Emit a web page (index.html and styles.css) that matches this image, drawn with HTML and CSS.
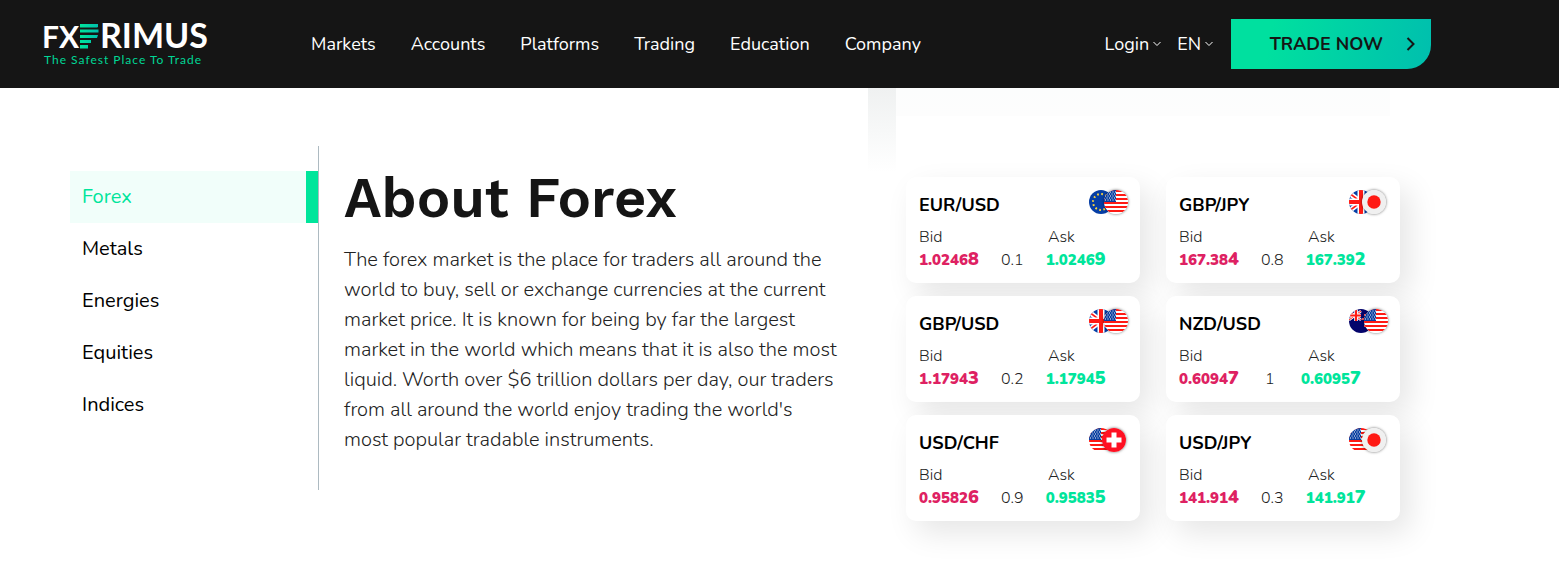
FILE: index.html
```html
<!DOCTYPE html>
<html lang="en">

  <head>
    <meta charset="UTF-8">
    <meta name="viewport" content="width=device-width, initial-scale=1.0">
    <title>FXPRIMUS</title>
    <link rel="stylesheet" href="styles.css">
  </head>

  <body>
    <!-- flags and arrows, reused below -->
    <svg class="sprite" aria-hidden="true">
      <symbol id="us" viewBox="0 0 24 24">
        <rect width="24" height="24" fill="#fff"/>
        <path d="M0 1h24M0 5h24M0 9h24M0 13h24M0 17h24M0 21h24" stroke="#ff1a14" stroke-width="2"/>
        <rect width="12" height="12" fill="#0a3fa0"/>
        <path d="M1 2h11M0 4h12M1 6h11M0 8h12M1 10h11" stroke="#fff" stroke-width="1" stroke-dasharray="1 1.5"/>
      </symbol>
      <symbol id="eu" viewBox="0 0 24 24">
        <rect width="24" height="24" fill="#063ea5"/>
        <circle cx="12" cy="12" r="8" fill="none" stroke="#ffd83a" stroke-width="2" stroke-dasharray="1.7 2.49"/>
      </symbol>
      <symbol id="gb" viewBox="0 0 24 24">
        <rect width="24" height="24" fill="#063ea5"/>
        <path d="M0 3l24 18M0 21l24-18" stroke="#fff" stroke-width="5"/>
        <path d="M0 3l24 18M0 21l24-18" stroke="#ff1a14" stroke-width="1.6"/>
        <path d="M12 0v24M0 12h24" stroke="#fff" stroke-width="7"/>
        <path d="M12 0v24M0 12h24" stroke="#ff1a14" stroke-width="4"/>
      </symbol>
      <symbol id="nz" viewBox="0 0 24 24">
        <rect width="24" height="24" fill="#04046b"/>
        <path d="M0 2l12 9M0 11l12-9" stroke="#fff" stroke-width="2.6"/>
        <path d="M0 2l12 9M0 11l12-9" stroke="#ff1a14" stroke-width="1"/>
        <path d="M7 0v12M0 6.500h12" stroke="#fff" stroke-width="3.600"/>
        <path d="M7 0v12M0 6.500h12" stroke="#ff1a14" stroke-width="2"/>
        <path d="M15 6h2M13 10h2M18 10h2M15 17h2" stroke="#ff5a5a" stroke-width="2"/>
      </symbol>
      <symbol id="jp" viewBox="0 0 24 24">
        <rect width="24" height="24" fill="#f0f0f0"/>
        <circle cx="12" cy="12" r="6.700" fill="#ff1a14"/>
      </symbol>
      <symbol id="ch" viewBox="0 0 24 24">
        <rect width="24" height="24" fill="#ff1022"/>
        <path d="M12 4.500v15M4.500 12h15" stroke="#fff" stroke-width="5"/>
      </symbol>
      <symbol id="down" viewBox="0 0 8 6">
        <path d="M0.500 1l3.500 3.500L7.500 1" fill="none" stroke="currentColor"/>
      </symbol>
    </svg>

    <header class="header">
      <a href="#" class="logo" aria-label="FXPRIMUS">
        <svg width="168" height="56" viewBox="0 -5 168 56">
          <defs>
            <linearGradient id="bars" x1="0" x2="1">
              <stop offset="0" stop-color="#00e59b"/>
              <stop offset="1" stop-color="#00bfae"/>
            </linearGradient>
          </defs>
          <text x="-2" y="27" class="logo-fx">FX</text>
          <path d="M36 3h18v3l-1 0.500H36zM36 8.500h18.500v3H36zM36 14h18l-1 3H36zM36 19h11v3H36zM36 24h8v3.500H36z" fill="url(#bars)"/>
          <text x="56" y="27" class="logo-primus">RIMUS</text>
          <text x="0" y="43" class="logo-line">The Safest Place To Trade</text>
        </svg>
      </a>
      <nav class="menu">
        <a href="#">Markets</a>
        <a href="#">Accounts</a>
        <a href="#">Platforms</a>
        <a href="#">Trading</a>
        <a href="#">Education</a>
        <a href="#">Company</a>
      </nav>
      <div class="tools">
        <button type="button" class="drop">Login<svg width="8" height="6"><use href="#down"/></svg></button>
        <button type="button" class="drop">EN<svg width="8" height="6"><use href="#down"/></svg></button>
        <button type="button" class="trade">TRADE NOW
          <svg width="10" height="14" viewBox="0 0 10 14"><path d="M1.500 1l6 6-6 6" fill="none" stroke="#151515" stroke-width="2"/></svg>
        </button>
      </div>
    </header>

    <main class="main">
      <nav class="side">
        <a href="#" class="on">Forex</a>
        <a href="#">Metals</a>
        <a href="#">Energies</a>
        <a href="#">Equities</a>
        <a href="#">Indices</a>
      </nav>

      <section class="about">
        <h1>About Forex</h1>
        <p>The forex market is the place for traders all around the world to buy, sell or exchange currencies at the current market price. It is known for being by far the largest market in the world which means that it is also the most liquid. Worth over $6 trillion dollars per day, our traders from all around the world enjoy trading the world's most popular tradable instruments.</p>
      </section>

      <section class="quotes">
        <div class="card">
          <div class="top">
            <h2>EUR/USD</h2>
            <div class="flags"><svg><use href="#eu"/></svg><svg class="front"><use href="#us"/></svg></div>
          </div>
          <div class="label"><span>Bid</span><span>Ask</span></div>
          <div class="price"><span class="bid">1.0246<b>8</b></span><span class="spread">0.1</span><span class="ask">1.0246<b>9</b></span></div>
        </div>
        <div class="card">
          <div class="top">
            <h2>GBP/JPY</h2>
            <div class="flags"><svg><use href="#gb"/></svg><svg class="front near"><use href="#jp"/></svg></div>
          </div>
          <div class="label"><span>Bid</span><span>Ask</span></div>
          <div class="price"><span class="bid">167.38<b>4</b></span><span class="spread">0.8</span><span class="ask">167.39<b>2</b></span></div>
        </div>
        <div class="card">
          <div class="top">
            <h2>GBP/USD</h2>
            <div class="flags"><svg><use href="#gb"/></svg><svg class="front"><use href="#us"/></svg></div>
          </div>
          <div class="label"><span>Bid</span><span>Ask</span></div>
          <div class="price"><span class="bid">1.1794<b>3</b></span><span class="spread">0.2</span><span class="ask">1.1794<b>5</b></span></div>
        </div>
        <div class="card">
          <div class="top">
            <h2>NZD/USD</h2>
            <div class="flags"><svg><use href="#nz"/></svg><svg class="front"><use href="#us"/></svg></div>
          </div>
          <div class="label"><span>Bid</span><span>Ask</span></div>
          <div class="price"><span class="bid">0.6094<b>7</b></span><span class="spread">1</span><span class="ask">0.6095<b>7</b></span></div>
        </div>
        <div class="card">
          <div class="top">
            <h2>USD/CHF</h2>
            <div class="flags"><svg><use href="#us"/></svg><svg class="front near"><use href="#ch"/></svg></div>
          </div>
          <div class="label"><span>Bid</span><span>Ask</span></div>
          <div class="price"><span class="bid">0.9582<b>6</b></span><span class="spread">0.9</span><span class="ask">0.9583<b>5</b></span></div>
        </div>
        <div class="card">
          <div class="top">
            <h2>USD/JPY</h2>
            <div class="flags"><svg><use href="#us"/></svg><svg class="front near"><use href="#jp"/></svg></div>
          </div>
          <div class="label"><span>Bid</span><span>Ask</span></div>
          <div class="price"><span class="bid">141.91<b>4</b></span><span class="spread">0.3</span><span class="ask">141.91<b>7</b></span></div>
        </div>
      </section>
    </main>
  </body>

</html>
```
FILE: styles.css
```css
* {
  box-sizing: border-box;
}

body {
  margin: 0;
  background: #fff;
  color: #000;
  font-family: Nunito, Lato, sans-serif;
}

a {
  color: inherit;
  text-decoration: none;
}

button {
  border: 0;
  background: none;
  font-family: inherit;
  cursor: pointer;
}

.sprite {
  position: absolute;
  width: 0;
  height: 0;
}

/* header */
.header {
  display: flex;
  align-items: center;
  height: 88px;
  padding: 0 128px 0 44px;
  background: #151515;
  color: #fff;
}

.logo svg {
  display: block;
  overflow: visible;
}

.logo text {
  font-family: Lato, sans-serif;
}

.logo-fx {
  fill: #fff;
  font-size: 30px;
  font-weight: 700;
}

.logo-primus {
  fill: #fff;
  font-size: 34px;
  font-weight: 700;
}

.logo-line {
  fill: #00d795;
  font-size: 12px;
  letter-spacing: 1px;
}

.menu {
  display: flex;
  gap: 35px;
  margin-left: 99px;
  font-size: 18px;
}

.tools {
  display: flex;
  align-items: center;
  gap: 16px;
  margin-left: auto;
}

.drop {
  display: flex;
  align-items: center;
  gap: 4px;
  padding: 0 2px 0 0;
  color: #fff;
  font-size: 18px;
}

.drop + .drop {
  margin-left: -2px;
}

.trade {
  display: flex;
  align-items: center;
  justify-content: flex-end;
  gap: 23px;
  width: 200px;
  height: 50px;
  padding: 0 15px;
  border-radius: 0 0 24px 0;
  background: linear-gradient(100deg, #00e09f 20%, #00bfae);
  color: #151515;
  font-size: 18px;
  font-weight: 700;
}

/* content */
.main {
  display: flex;
  align-items: flex-start;
  padding: 58px 159px 40px 70px;
  /* very pale screen fading out behind the quotes */
  background:
    linear-gradient(#eff1f1, #fff) right 663px top 0 / 28px 84px no-repeat,
    linear-gradient(#fcfdfd, #fdfdfd) right 169px top 0 / 494px 28px no-repeat;
}

.side {
  flex: none;
  width: 249px;
  min-height: 344px;
  padding-top: 25px;
  border-right: 1px solid #adbac1;
}

.side a {
  display: block;
  padding: 0 12px;
  font-size: 20px;
  line-height: 52px;
}

.side .on {
  border-right: 12px solid #00e59b;
  background: #f1fefa;
  color: #00e59b;
}

.about {
  flex: 1;
  padding: 22px 66px 0 25px;
}

.about h1 {
  margin: 0;
  color: #151515;
  font-family: "Work Sans", Inter, sans-serif;
  font-size: 56px;
  font-weight: 600;
  line-height: 60px;
}

.about p {
  margin: 17px 0 0;
  color: #222;
  font-size: 20px;
  font-weight: 300;
  line-height: 30px;
}

.quotes {
  display: grid;
  flex: none;
  grid-template-columns: 234px 234px;
  gap: 13px 26px;
  padding-top: 31px;
}

.card {
  height: 106px;
  padding: 13px 11px 0 13px;
  border-radius: 10px;
  background: #fff;
  box-shadow: 10px 12px 30px rgba(0, 0, 0, 0.1);
}

.top {
  display: flex;
  justify-content: space-between;
}

.top h2 {
  margin: 0;
  font-size: 18px;
  font-weight: 700;
  line-height: 30px;
}

.flags {
  display: flex;
  width: 40px;
}

.flags svg {
  flex: none;
  width: 24px;
  height: 24px;
  border-radius: 50%;
}

.flags .front {
  margin-left: -9px;
  box-shadow: 0 0 3px rgba(0, 0, 0, 0.6);
}

.flags .near {
  margin-left: -11px;
}

.label {
  display: grid;
  grid-template-columns: 129px 1fr;
  margin-top: 6px;
  color: #222;
  font-size: 16px;
  font-weight: 300;
  line-height: 22px;
}

.price {
  display: flex;
  align-items: baseline;
  font-size: 15px;
  font-weight: 900;
  line-height: 22px;
}

.price b {
  font-size: 18px;
  font-weight: 900;
}

.bid {
  color: #de2162;
}

.spread {
  min-width: 62px;
  padding: 0 22px;
  color: #222;
  font-size: 16px;
  font-weight: 300;
  text-align: center;
}

.ask {
  color: #00e59b;
}
```
